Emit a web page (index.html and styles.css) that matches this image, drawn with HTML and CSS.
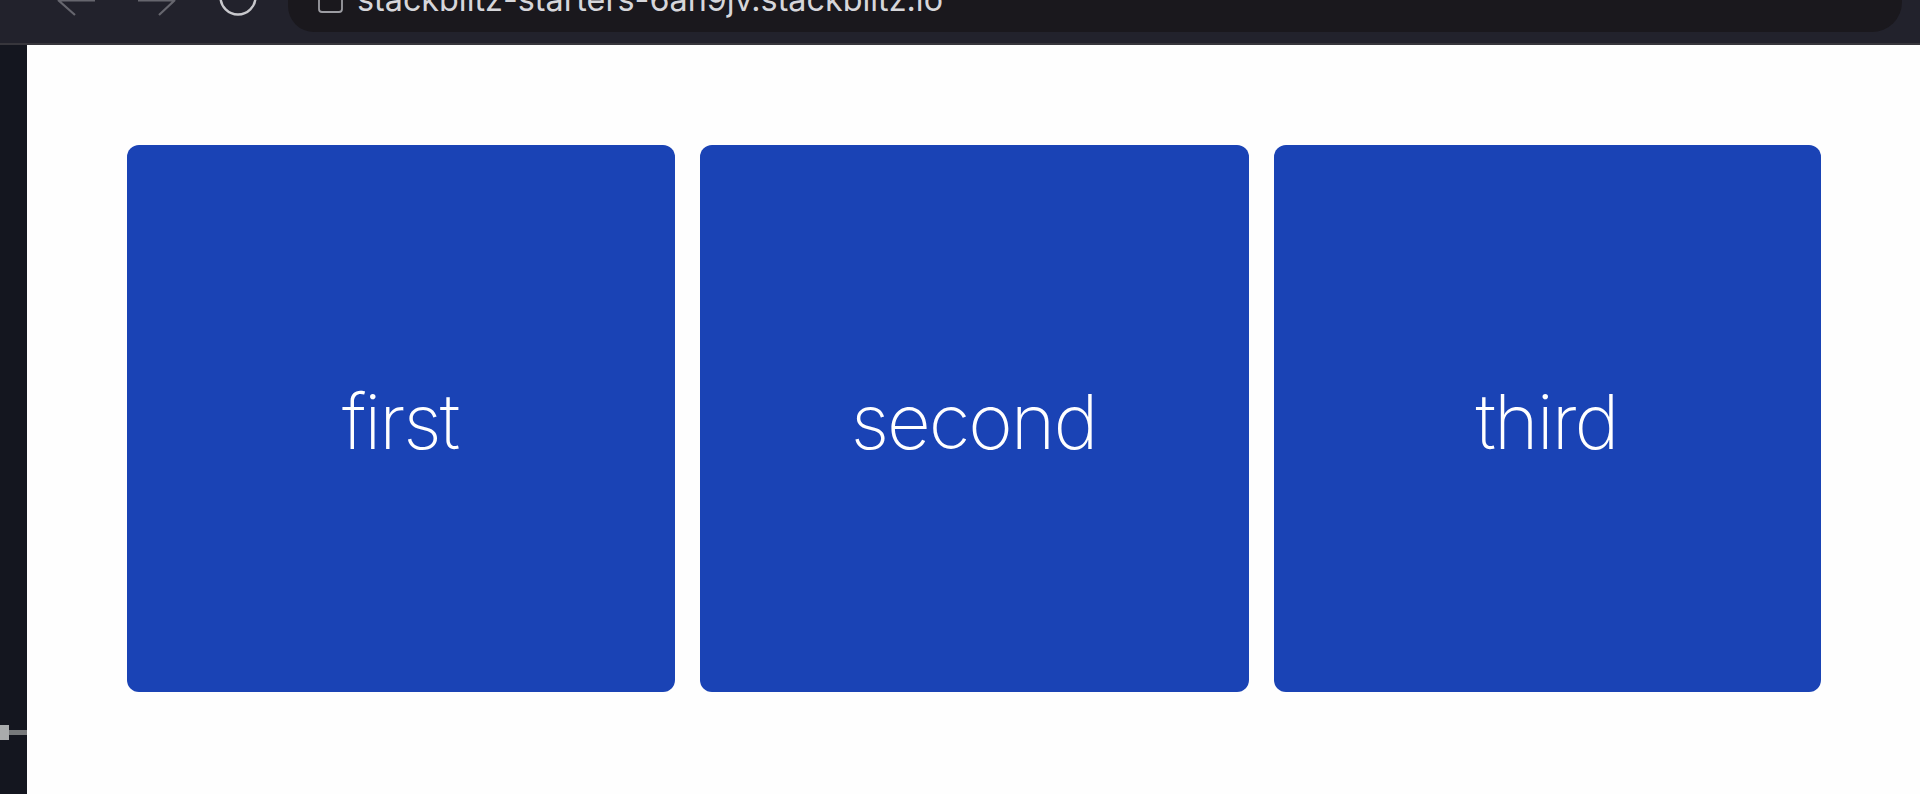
FILE: index.html
```html
<!DOCTYPE html>
<html lang="en">
<head>
<meta charset="utf-8">
<title>stackblitz-starters</title>
<link rel="stylesheet" href="styles.css">
</head>
<body>
<header class="browser-bar">
  <div class="nav-icons">
    <svg class="icon-back" width="40" height="16" viewBox="0 0 40 16"><path d="M38 0.5 H1 M1 0 L18 15" fill="none" stroke="#66666e" stroke-width="2.2"/></svg>
    <svg class="icon-forward" width="38" height="16" viewBox="0 0 38 16"><path d="M0 0.5 H37 M37 0 L21 15" fill="none" stroke="#66666e" stroke-width="2.2"/></svg>
    <svg class="icon-reload" width="38" height="17" viewBox="0 0 38 17"><circle cx="19" cy="-3" r="17.5" fill="none" stroke="#c8c8cc" stroke-width="2.4"/></svg>
  </div>
  <div class="url-bar">
    <svg class="icon-lock" width="25" height="13" viewBox="0 0 25 13"><path d="M1 0 V9 Q1 12 4 12 H21 Q24 12 24 9 V0" fill="none" stroke="#9c9ca2" stroke-width="1.8"/></svg>
    <span class="url-text">stackblitz-starters-6an9jv.stackblitz.io</span>
  </div>
</header>
<div class="workspace">
  <aside class="sidebar">
    <div class="slider">
      <span class="slider-handle"></span>
      <span class="slider-line"></span>
    </div>
  </aside>
  <main class="cards">
    <div class="card">first</div>
    <div class="card">second</div>
    <div class="card">third</div>
  </main>
</div>
</body>
</html>
```
FILE: styles.css
```css
* { box-sizing: border-box; }
html, body { margin: 0; height: 100%; overflow: hidden; background: #fff; }
body { display: flex; flex-direction: column; font-family: Inter, "Liberation Sans", sans-serif; }

.browser-bar {
  display: flex;
  align-items: flex-start;
  height: 45px;
  flex: none;
  overflow: hidden;
  background: #22222c;
  border-bottom: 2px solid #37363c;
}
.nav-icons { display: flex; align-items: flex-start; width: 288px; flex: none; padding-left: 57px; }
.icon-back { flex: none; }
.icon-forward { flex: none; margin-left: 41px; }
.icon-reload { flex: none; margin-left: 43px; }

.url-bar {
  display: flex;
  align-items: flex-start;
  width: 1614px;
  height: 32px;
  background: #1a181d;
  border-radius: 0 0 30px 26px;
  padding-left: 30px;
}
.icon-lock { flex: none; }
.url-text {
  margin-left: 14px;
  margin-top: -15px;
  line-height: 30px;
  font-size: 32.3px;
  color: #d6d6da;
  white-space: nowrap;
}

.workspace { display: flex; flex: 1; min-height: 0; }
.sidebar { width: 27px; flex: none; background: #14161f; padding-top: 680px; }
.slider { display: flex; align-items: center; }
.slider-handle { width: 9px; height: 15px; background: #a9abac; }
.slider-line { flex: 1; height: 5px; background: #77797b; }

.cards {
  flex: 1;
  display: grid;
  grid-template-columns: 548px 549px 547px;
  grid-auto-rows: 547px;
  gap: 25px;
  padding: 100px 99px 0 100px;
  background: #fefefe;
}
.card {
  display: flex;
  align-items: center;
  justify-content: center;
  padding: 5px 2px 0 0;
  background: #1a43b5;
  border-radius: 12px;
  color: #fff;
  font-size: 76px;
  font-weight: 200;
  letter-spacing: -2px;
}
```
